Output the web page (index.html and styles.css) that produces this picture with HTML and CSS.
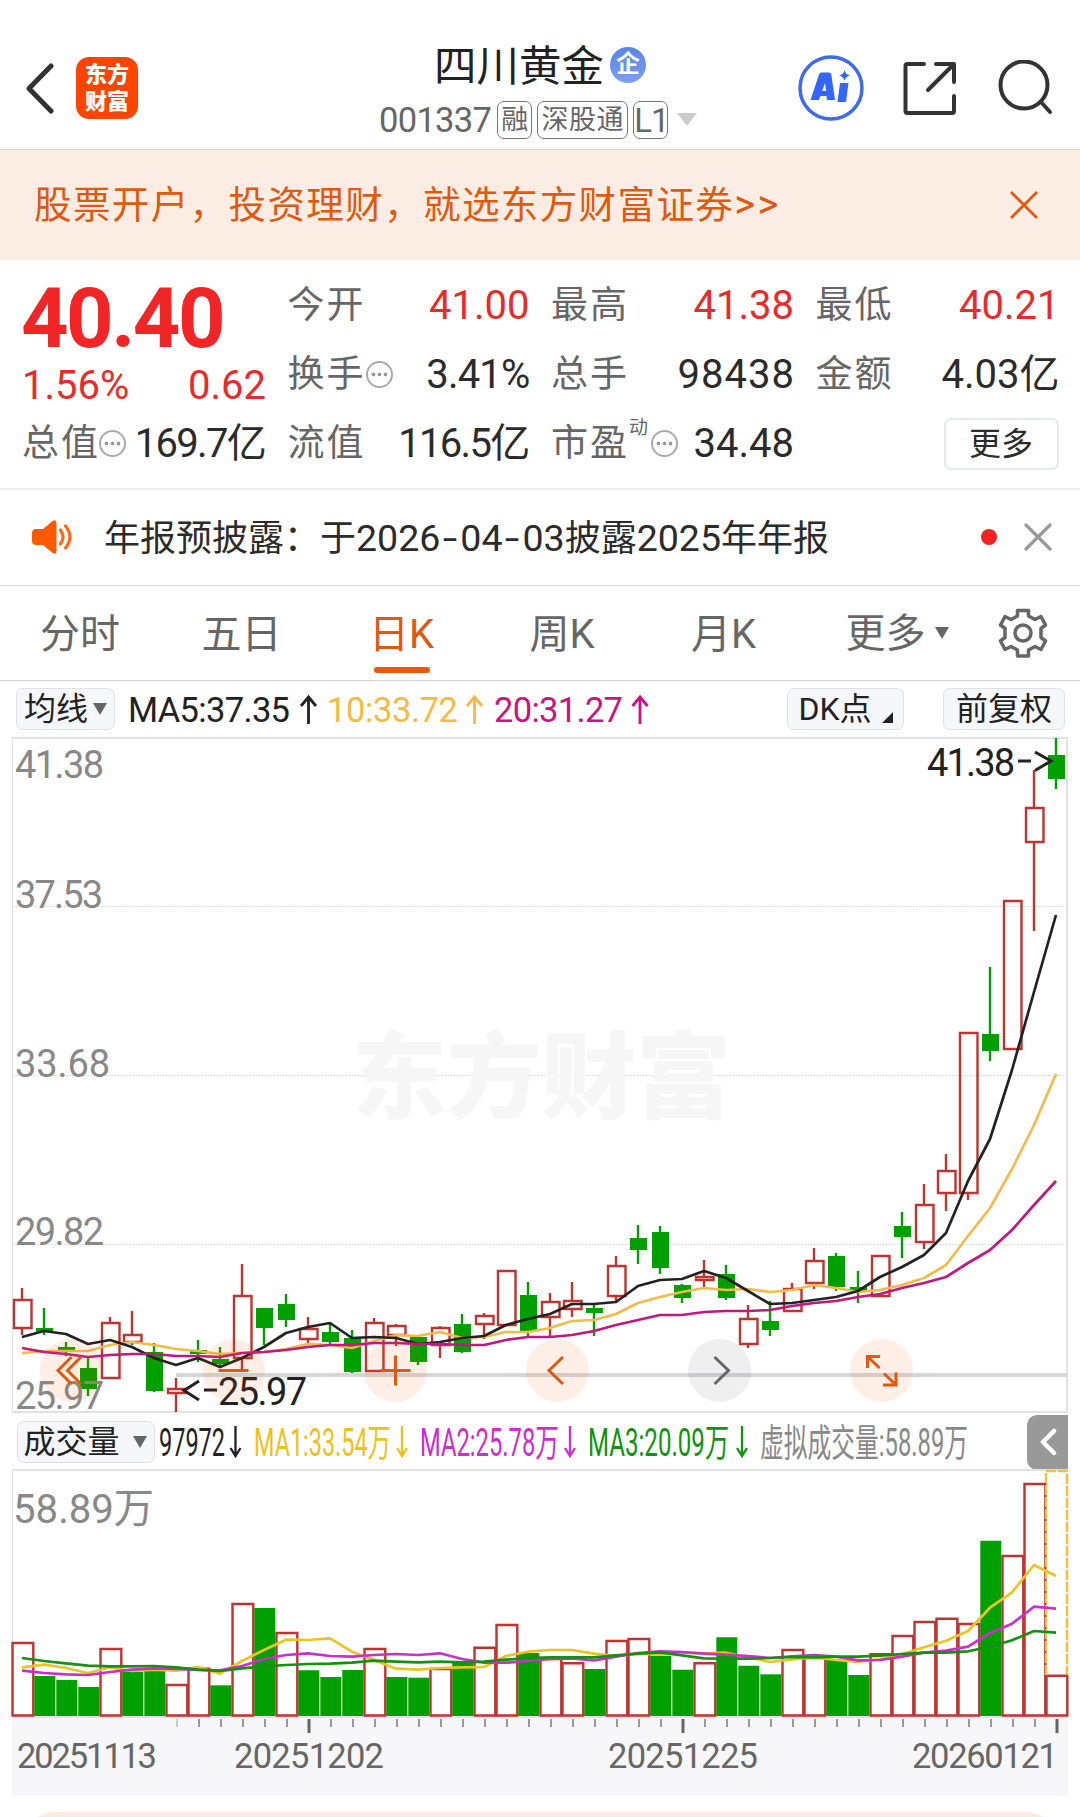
FILE: index.html
```html
<!DOCTYPE html>
<html lang="zh-CN">
<head>
<meta charset="utf-8">
<title>四川黄金 001337</title>
<link rel="stylesheet" href="styles.css">
</head>
<body>
<header class="topbar">
  <div class="topbar-left">
    <svg class="back" width="32" height="56" viewBox="0 0 32 56"><path d="M29 6 7 28.500 29 51"/></svg>
    <div class="logo"><span>东方</span><span>财富</span></div>
  </div>
  <div class="stock">
    <div class="stock-name"><span>四川黄金</span><i class="badge">企</i></div>
    <div class="stock-code"><span class="code">001337</span><span class="tag">融</span><span class="tag wide">深股通</span><span class="tag">L1</span><svg width="20" height="14" viewBox="0 0 20 14"><path fill="#ccc" d="M0 0h20L10 13z"/></svg></div>
  </div>
  <div class="topbar-right">
    <svg width="66" height="66" viewBox="0 0 66 66"><circle cx="33" cy="33" r="31" fill="none" stroke="#3f6be8" stroke-width="3.500"/><path fill="#3366ff" fill-rule="evenodd" d="M23 17.500h8q2 0 2.300 2L37 45h-8l-.6-4h-6l-1.500 4H12.500L21 19.500q.6-2 2-2zM27 28l-2.800 8h4zM42 28h8.500L48 47h-8.500zM46.500 15q1 4.500 5.500 5.500-4.500 1-5.500 5.500-1-4.500-5.500-5.500 4.500-1 5.500-5.500z"/></svg>
    <svg width="56" height="56" viewBox="0 0 56 56" class="line"><path d="M22 4H5.500q-2 0-2 2v45q0 2 2 2H50q2 0 2-2V36M34 4h18v18M51 5 26 30"/></svg>
    <svg width="56" height="56" viewBox="0 0 56 56" class="line"><circle cx="26" cy="25" r="23.500"/><path d="m43 42 9 10"/></svg>
  </div>
</header>

<section class="promo"><span>股票开户，投资理财，就选东方财富证券<em>&gt;&gt;</em></span>
  <svg width="30" height="30" viewBox="0 0 30 30"><path d="M2 2 28 28M28 2 2 28" stroke="#e0590f" stroke-width="2.800"/></svg>
</section>

<section class="quote">
  <div class="col">
    <div class="last">40.40</div>
    <div class="cell chg up"><span>1.56%</span><span>0.62</span></div>
    <div class="cell"><label>总值</label><i class="more"></i><b class="tight">169.7亿</b></div>
  </div>
  <div class="col">
    <div class="cell"><label>今开</label><b class="up">41.00</b></div>
    <div class="cell"><label>换手</label><i class="more"></i><b class="snug">3.41%</b></div>
    <div class="cell"><label>流值</label><b class="tight">116.5亿</b></div>
  </div>
  <div class="col">
    <div class="cell"><label>最高</label><b class="up">41.38</b></div>
    <div class="cell"><label>总手</label><b class="loose">98438</b></div>
    <div class="cell"><label>市盈</label><sup>动</sup><i class="more"></i><b>34.48</b></div>
  </div>
  <div class="col">
    <div class="cell"><label>最低</label><b class="up">40.21</b></div>
    <div class="cell"><label>金额</label><b>4.03亿</b></div>
    <div class="cell end"><button class="more-btn">更多</button></div>
  </div>
</section>

<section class="notice">
  <svg width="42" height="36" viewBox="0 0 42 36"><path fill="#ff5a00" d="M4 10h7L20 2.500Q24.500-.5 24.500 4v28q0 4.500-4.500 1.500L11 26H4q-4 0-4-4v-8q0-4 4-4z"/><path d="M28.500 11q5 7 0 14M33.500 7q9 11 0 22" fill="none" stroke="#ff6a1a" stroke-width="3.200" stroke-linecap="round"/></svg>
  <p>年报预披露：于<span class="num">2026<span class="dash">-</span>04<span class="dash">-</span>03</span>披露<span class="num">2025</span>年年报</p>
  <i class="dot"></i>
  <svg width="28" height="28" viewBox="0 0 28 28"><path d="M2 2 26 26M26 2 2 26" stroke="#999" stroke-width="3.200" stroke-linecap="round"/></svg>
</section>

<nav class="tabs">
  <a>分时</a><a>五日</a><a class="active">日K</a><a>周K</a><a>月K</a>
  <a class="drop">更多<svg width="14" height="12" viewBox="0 0 14 12"><path fill="#666" d="M0 0h14L7 12z"/></svg></a>
  <svg class="gear" width="50" height="50" viewBox="-25 -25 50 50"><path d="M-5.500-22.500h11V-17L12-13.500l6-3 4.500 8.500-4.500 3.500v9L22.500 8 18 16.500l-6-3L5.500 17v6h-11v-6L-12 13.500l-6 3L-22.500 8l4.500-3.500v-9L-22.500-8l4.500-8.500 6 3L-5.500-17z"/><circle r="8"/></svg>
</nav>

<section class="ma-bar">
  <button class="chip ma-chip">均线<svg width="14" height="12" viewBox="0 0 14 12"><path fill="#666" d="M0 0h14L7 12z"/></svg></button>
  <svg class="legend" width="530" height="50" viewBox="125 685 530 50">
    <g fill="#222"><text x="128" y="723" textLength="162">MA5:37.35</text></g>
    <g fill="#f3bb45"><text x="327" y="723" textLength="131">10:33.72</text></g>
    <g fill="#c9147f"><text x="494" y="723" textLength="129">20:31.27</text></g>
    <path stroke="#222" d="M308.500 725V698m-7.500 9 7.500-9 7.500 9"/>
    <path stroke="#f3bb45" d="M474.500 725V698m-7.500 9 7.500-9 7.500 9"/>
    <path stroke="#c9147f" d="M640 725V698m-7.500 9 7.500-9 7.500 9"/>
  </svg>
  <button class="chip dk-chip">DK点<svg width="11" height="11" viewBox="0 0 11 11"><path fill="#222" d="M11 0v11H0z"/></svg></button>
  <button class="chip fq-chip">前复权</button>
</section>

<svg class="kline" width="1080" height="678" viewBox="0 737 1080 678">
  <g class="frame"><path d="M12 738h1056M1067 738v674M12 1412h1056"/><path stroke-width="1" d="M12.500 738v674"/></g>
  <path class="grid" d="M13 906.500h1054M13 1075.500h1054M13 1244.500h1054"/>
  <text class="watermark" x="352" y="1111" textLength="379" lengthAdjust="spacingAndGlyphs">东方财富</text>
  <path stroke="#d3d7da" stroke-width="4" d="M176 1375h891"/>
  <g id="candles"></g>
  <g id="price-averages"></g>
  <g class="scale">
    <text x="15" y="777.500" textLength="89">41.38</text><text x="15" y="907.500" textLength="88">37.53</text>
    <text x="15" y="1076.500" textLength="95">33.68</text><text x="15" y="1244.500" textLength="89">29.82</text>
    <text x="15" y="1409" textLength="89">25.97</text>
  </g>
  <g class="mark"><text x="927" y="775.500" textLength="88">41.38</text><text x="218" y="1404.500" textLength="89">25.97</text>
    <path d="M1018 761h13M1035 752l16 9-16 9.500M217 1390h-13M199 1381l-15 9.500 15 9.500"/></g>
  <g class="pads">
    <circle cx="71" cy="1370.500" r="31.500"/><circle cx="233.500" cy="1370.500" r="31.500"/><circle cx="395.500" cy="1370.500" r="31.500"/><circle cx="557.500" cy="1370.500" r="31.500"/><circle class="off" cx="719.500" cy="1370.500" r="31.500"/><circle cx="881.500" cy="1370.500" r="31.500"/>
    <path d="M71.500 1357l-13.500 13.500 13.500 13.500M81 1357l-13.500 13.500 13.500 13.500M218.500 1370.500h30M380.500 1370.500h30M395.500 1355.500v30M563 1357l-14 13.500 14 13.500"/>
    <path class="off" d="M714.500 1357l14 13.500-14 13.500"/>
    <path d="M880 1356.500h-12.500V1368M867.500 1356.500l12 11.500M883 1385h13v-12.500M896 1385l-12-11.500"/>
  </g>
</svg>

<section class="vol-bar">
  <button class="chip vol-chip">成交量<svg width="14" height="12" viewBox="0 0 14 12"><path fill="#666" d="M0 0h14L7 12z"/></svg></button>
  <svg class="legend narrow" width="820" height="50" viewBox="157 1417 820 50">
    <text fill="#222" x="159" y="1456" textLength="66" lengthAdjust="spacingAndGlyphs">97972</text>
    <text fill="#efc118" x="254" y="1456" textLength="137" lengthAdjust="spacingAndGlyphs">MA1:33.54万</text>
    <text fill="#d02bd0" x="420" y="1456" textLength="139" lengthAdjust="spacingAndGlyphs">MA2:25.78万</text>
    <text fill="#0b960b" x="588" y="1456" textLength="141" lengthAdjust="spacingAndGlyphs">MA3:20.09万</text>
    <text fill="#888" x="760" y="1456" textLength="208" lengthAdjust="spacingAndGlyphs">虚拟成交量:58.89万</text>
    <path stroke="#222" d="M235.500 1426v30m-5-8 5 8 5-8"/><path stroke="#efc118" d="M402 1426v30m-5-8 5 8 5-8"/>
    <path stroke="#d02bd0" d="M570 1426v30m-5-8 5 8 5-8"/><path stroke="#0b960b" d="M742 1426v30m-5-8 5 8 5-8"/>
  </svg>
  <div class="side"><svg width="18" height="28" viewBox="0 0 18 28"><path d="M15 3 4 14l11 11"/></svg></div>
</section>

<svg class="volume" width="1080" height="249" viewBox="0 1469 1080 249">
  <g class="frame"><path d="M12 1470h1056M12 1717.500h1056"/><path stroke-width="1" d="M12.500 1470v247M1067.500 1470v247"/></g>
  <g id="bars"></g>
  <g id="volume-averages"></g>
  <text class="vol-max" x="13" y="1522.500" textLength="141" lengthAdjust="spacingAndGlyphs">58.89万</text>
</svg>

<footer class="axis">
  <svg width="1056" height="78" viewBox="12 1718 1056 78">
    <g id="ticks"></g>
    <text x="17" y="1767.500" textLength="140">20251113</text><text x="234" y="1767.500" textLength="150">20251202</text>
    <text x="608" y="1767.500" textLength="150">20251225</text><text x="912" y="1767.500" textLength="146">20260121</text>
  </svg>
</footer>
<div class="bottom-card"></div>
<script src="chart.js"></script>
</body>
</html>
```
FILE: chart.js
```js
const STEP = 22;
const x = i => 22 + STEP * i;
const UP = '#bf3431', DOWN = '#00a000';

// direction, high, body top, body bottom, low
const candles = `r1288,1300,1328,1335 g1308,1328,1332,1335 g1342,1347,1351,1356 g1357,1368,1389,1396 r1317,1323,1378,1379
r1311,1335,1342,1345 g1343,1352,1391,1392 r1378,1389,1393,1412 g1340,1350,1354,1362 g1347,1359,1364,1367
r1264,1296,1358,1370 g1308,1308,1328,1345 g1294,1304,1320,1327 r1317,1329,1339,1345 g1323,1332,1342,1345
g1330,1338,1372,1373 r1318,1323,1371,1372 r1324,1326,1335,1346 g1335,1337,1362,1365 r1326,1328,1345,1358
g1314,1324,1352,1353 r1313,1316,1324,1339 r1271,1271,1325,1325 g1282,1295,1331,1336 r1293,1302,1317,1338
r1282,1301,1309,1317 g1304,1308,1313,1336 r1256,1266,1296,1301 g1225,1238,1250,1264 g1226,1232,1268,1274
g1284,1285,1298,1303 r1260,1277,1280,1287 g1265,1274,1298,1300 r1305,1319,1344,1348 g1301,1321,1330,1336
r1283,1289,1311,1311 r1248,1261,1283,1289 g1253,1256,1287,1291 g1271,1287,1291,1303 r1256,1256,1296,1296
g1212,1226,1237,1258 r1184,1205,1242,1249 r1154,1171,1193,1211 r1033,1033,1193,1200 g967,1034,1051,1061
r901,901,1049,1049 r770,808,842,931 g738,755,779,789`.split(/\s+/);

document.getElementById('candles').innerHTML = candles.map((c, i) => {
  const [hi, top, bot, lo] = c.slice(1).split(',').map(Number);
  const cx = x(i);
  return c[0] === 'g'
    ? `<path stroke="${DOWN}" stroke-width="2.400" d="M${cx} ${hi}V${lo}"/><path fill="${DOWN}" d="M${cx - 8} ${top}h17V${bot}h-17z"/>`
    : `<path fill="none" stroke="${UP}" stroke-width="2.400" d="M${cx} ${hi}V${top}M${cx} ${bot}V${lo}M${cx - 8} ${top}h17.500V${bot}h-17.500z"/>`;
}).join('');

const line = (color, ys) => `<polyline fill="none" stroke="${color}" stroke-width="2.700" stroke-linejoin="round" points="${ys.map((y, i) => x(i) + ',' + y).join(' ')}"/>`;

document.getElementById('price-averages').innerHTML =
  line('#f0bb4b', [1353,1351,1351,1351,1345,1342,1345,1349,1351,1354,1353,1352,1349,1344,1345,1348,1341,1335,1336,1332,1338,1337,1332,1332,1328,1321,1320,1314,1303,1297,1292,1288,1290,1289,1292,1290,1285,1288,1292,1290,1285,1278,1265,1236,1208,1169,1125,1074]) +
  line('#222', [1337,1331,1334,1344,1340,1347,1358,1365,1358,1367,1358,1347,1333,1327,1323,1338,1337,1338,1344,1342,1338,1336,1325,1319,1314,1304,1304,1302,1286,1280,1279,1271,1278,1291,1304,1303,1300,1297,1291,1277,1267,1255,1233,1181,1139,1070,992,915]) +
  line('#c2187e', [1348,1352,1354,1357,1355,1354,1354,1356,1356,1357,1353,1352,1350,1347,1345,1345,1343,1343,1344,1344,1345,1345,1340,1337,1337,1335,1331,1325,1320,1315,1315,1312,1311,1311,1310,1306,1303,1301,1297,1294,1288,1283,1277,1263,1250,1230,1205,1181]);

// Volume levels are thirds of a pixel below VOL_TOP.
const VOL_TOP = 1460, BASE = 1716;
const vy = v => +(VOL_TOP + v / 3).toFixed(1);
const volumes = 'r549 g648 g660 g681 r567 g635 g632 r675 r626 g676 r432 g444 r519 g631 g651 g630 r567 g651 g653 r627 g608 r563 r495 g579 r597 r610 g627 r543 r537 g587 g629 r610 g532 g617 g643 r570 r594 g600 g645 r583 r528 r486 r476 r492 g242 r288 r72 r647'.split(' ');

document.getElementById('bars').innerHTML = volumes.map((v, i) => {
  const top = vy(+v.slice(1)), cx = x(i);
  return v[0] === 'g'
    ? `<path fill="${DOWN}" d="M${cx - 9.700} ${top}h21V${BASE}h-21z"/>`
    : `<path fill="none" stroke="${UP}" stroke-width="2.400" d="M${cx - 9.500} ${top}h20.800V${BASE - .5}h-20.800z"/>`;
}).join('') + '<path fill="none" stroke="#e9c43c" stroke-width="2.500" stroke-dasharray="10 2" d="M1046 1675V1471h21V1675"/>';

document.getElementById('volume-averages').innerHTML =
  line('#eac423', [622,614,624,639,622,633,629,632,621,641,603,570,539,540,535,575,600,626,629,624,622,621,588,575,570,570,581,588,582,583,578,580,578,592,606,598,592,600,606,597,583,562,542,513,443,397,315,348].map(vy)) +
  line('#ca2fca', [632,639,643,645,636,629,625,627,630,631,618,597,585,580,588,590,585,582,585,580,597,608,608,603,597,595,601,590,579,574,576,581,584,588,594,589,585,590,601,600,590,578,572,560,519,491,440,446].map(vy)) +
  line('#149114', [594,603,610,617,619,619,618,622,629,633,625,619,615,612,611,608,602,605,607,605,607,605,599,594,592,592,592,586,581,577,586,595,596,596,594,591,592,590,590,587,582,578,578,574,560,541,513,518].map(vy));

const MAJOR = [13, 30, 47];
document.getElementById('ticks').innerHTML = Array.from({ length: 41 }, (_, k) => k + 7).map(i =>
  MAJOR.includes(i)
    ? `<path stroke="#666" stroke-width="3" d="M${x(i) + 1} 1719v14"/>`
    : `<path stroke="${i === 7 ? '#ccc' : '#999'}" stroke-width="2" d="M${x(i) + 1} 1719v8"/>`).join('');
```
FILE: styles.css
```css
* { box-sizing: border-box; }
body {
  margin: 0;
  width: 1080px;
  height: 1817px;
  overflow: hidden;
  background: #fff;
  color: #2b2b2b;
  font-family: Roboto, "Noto Sans CJK SC", sans-serif;
}
svg { display: block; flex: none; }
i, em { font-style: normal; }
b { font-weight: 400; }
button { font: inherit; color: inherit; }

.topbar {
  height: 150px;
  padding: 27px 26px 0 22px;
  border-bottom: 1px solid #d5d5d5;
  display: grid;
  grid-template-columns: 340px 1fr 256px;
}
.topbar-left { display: flex; align-items: center; gap: 22px; }
.back path { fill: none; stroke: #333; stroke-width: 5; stroke-linecap: round; stroke-linejoin: round; }
.logo {
  width: 62px;
  height: 62px;
  padding-bottom: 5px;
  border-radius: 13px;
  background: #ff4400;
  color: #fff;
  font: 900 22px/27px "Noto Sans CJK SC", sans-serif;
  display: flex;
  flex-direction: column;
  align-items: center;
  justify-content: center;
}
.stock { padding: 16px 0 0 17px; }
.stock-name { display: flex; align-items: center; height: 48px; font-size: 42.500px; line-height: 48px; color: #222; padding-left: 55px; gap: 6px; }
.badge {
  width: 36px;
  height: 36px;
  margin-top: -5px;
  border-radius: 50%;
  background: linear-gradient(#5a84e6, #7ba0ee);
  color: #fff;
  font-size: 24px;
  font-weight: 700;
  line-height: 35px;
  text-align: center;
}
.stock-code { display: flex; align-items: center; height: 57px; color: #666; gap: 5px; }
.code { font-size: 34.500px; letter-spacing: -.7px; margin-right: 1px; }
.tag { width: 35px; height: 38px; border: 1px solid #777; border-radius: 7px; font-size: 27px; line-height: 37px; text-align: center; white-space: nowrap; }
.tag.wide { width: 91px; letter-spacing: .5px; }
.tag:nth-child(4) { font-size: 33px; letter-spacing: -1px; }
.stock-code svg { margin-left: 4px; }
.topbar-right { display: flex; align-items: center; gap: 38px; }
.topbar-right svg:last-child { margin-left: 2px; }
.line { fill: none; stroke: #333; stroke-width: 4; stroke-linecap: round; stroke-linejoin: round; }

.promo {
  height: 110px;
  padding: 0 41px 0 34px;
  background: #fcede4;
  color: #e0590f;
  display: flex;
  align-items: center;
  justify-content: space-between;
  font-size: 37.500px;
  letter-spacing: 1.400px;
}
.promo span { padding-bottom: 7px; }
.promo em { font-size: 40px; letter-spacing: 2.500px; }

.quote { height: 230px; padding: 11px 24px 0; border-bottom: 2px solid #efefef; display: grid; grid-template-columns: 240px 238px 239px 238px; column-gap: 25.500px; }
.cell { height: 69px; display: flex; align-items: center; font-size: 40px; line-height: 71px; }
.cell label { font-size: 37px; letter-spacing: 2px; color: #666; width: 77px; margin-left: -2px; flex: none; white-space: nowrap; }
.cell b { margin-left: auto; margin-right: -2px; white-space: nowrap; }
.cell b.tight { letter-spacing: -1.700px; margin-right: -1px; }
.cell b.snug { letter-spacing: -.8px; }
.cell b.loose { letter-spacing: 1px; margin-right: -3px; }
.col:last-child b { margin-right: -4px; }
.up { color: #ea2a2a; }
.last { height: 69px; margin-left: -3px; padding-top: 13px; font-size: 83px; line-height: 69px; font-weight: 700; letter-spacing: -2.500px; color: #f12525; }
.chg { justify-content: space-between; padding-top: 22px; margin: 0 -2px; }
.more {
  width: 27px;
  height: 27px;
  flex: none;
  border: 2px solid #aaa;
  border-radius: 50%;
  background: radial-gradient(circle at 5.500px 11.500px, #999 1.700px, transparent 2.200px), radial-gradient(circle at 11.500px 11.500px, #999 1.700px, transparent 2.200px), radial-gradient(circle at 17.500px 11.500px, #999 1.700px, transparent 2.200px);
}
.col:nth-child(n+2) .more { margin-left: 1px; }
.cell sup { width: 21px; margin-left: 1px; font-size: 19px; line-height: 20px; color: #666; align-self: flex-start; padding-top: 9px; }
.cell.end { justify-content: flex-end; }
.more-btn { width: 115px; height: 52px; margin-right: -3px; padding: 0; border: 2px solid #e6e9ea; border-radius: 7px; background: #fff; font-size: 32px; line-height: 46px; }

.notice { height: 96px; padding: 0 28px 2px 32px; border-bottom: 1px solid #d5d5d5; display: flex; align-items: center; }
.notice p { margin: 0 auto 0 30px; padding-bottom: 4px; font-size: 36px; white-space: nowrap; }
.num { font-size: 37.500px; }
.dash { display: inline-block; width: 20px; text-align: center; transform: scaleX(1.4); }
.dot { width: 16px; height: 16px; border-radius: 50%; background: #f22222; margin-right: 27px; }

.tabs { height: 95px; border-bottom: 1px solid #d5d5d5; display: flex; align-items: center; padding-left: 40px; color: #666; font-size: 40px; }
.tabs a { width: 161.500px; height: 94px; line-height: 97px; }
.tabs a:nth-child(3) { margin-left: 6px; }
.tabs a:nth-child(4) { margin-left: -1px; }
.tabs .active { color: #e0590f; position: relative; }
.active::after { content: ""; position: absolute; left: 5px; bottom: 7px; width: 56px; height: 6px; border-radius: 3px; background: #e8590c; }
.tabs .drop { display: flex; align-items: center; gap: 9px; margin-left: -7px; }
.gear { margin-left: -9px; fill: none; stroke: #666; stroke-width: 3.500; stroke-linejoin: round; }

.ma-bar, .vol-bar { display: flex; align-items: center; }
.ma-bar { height: 56px; padding-left: 16px; }
.chip { height: 42px; padding: 0; border: 1.500px solid #dfe2e5; border-radius: 7px; background: #f6f7fa; display: flex; align-items: center; justify-content: center; font-size: 32px; line-height: 40px; color: #222; white-space: nowrap; flex: none; }
.ma-chip { width: 99px; gap: 5px; }
.dk-chip { width: 117px; margin-left: 132px; gap: 10px; }
.dk-chip svg { align-self: flex-end; margin-bottom: 6px; }
.fq-chip { width: 122px; margin-left: 39px; }
.legend { margin-left: 10px; font-size: 34.500px; fill: none; }
.legend path { stroke-width: 2.800; fill: none; }
.frame path { fill: none; stroke: #e2e2e2; stroke-width: 2; }
.frame path + path { stroke-width: 1px; }
.grid { stroke: #d5d5d5; stroke-width: 1; stroke-dasharray: 1.500 1.500; }
.watermark { font: 900 94px "Noto Sans CJK SC", sans-serif; fill: #f6f6f6; }
.scale text { font-size: 38px; fill: #888; }
.mark text { font-size: 38px; fill: #222; }
.mark path { fill: none; stroke: #222; stroke-width: 3; }
.pads circle { fill: #ff5a0a; fill-opacity: .1; }
.pads circle.off { fill: #666; fill-opacity: .1; }
.pads path { fill: none; stroke: #e0590f; stroke-width: 3; }
.pads path.off { stroke: #666; }

.vol-bar { height: 54px; padding-left: 17px; }
.vol-chip { width: 138px; gap: 13px; padding-right: 2px; }
.narrow { margin-left: 2px; font-size: 38px; }
.narrow path { stroke-width: 2.300; }
.side { width: 41px; height: 55px; margin-left: 50px; border-radius: 10px 0 0 10px; background: #999; display: flex; align-items: center; justify-content: center; }
.side path { fill: none; stroke: #fff; stroke-width: 4.500; stroke-linecap: round; stroke-linejoin: round; }
.vol-max { font-size: 41px; fill: #888; }

.axis { margin: 0 12px; height: 78px; background: #f7f7fa; }
.axis text { font-size: 34.500px; fill: #666; }
.bottom-card { margin: 16px 24px 0 25px; height: 60px; border-radius: 30px; background: #fdebe2; }
```
